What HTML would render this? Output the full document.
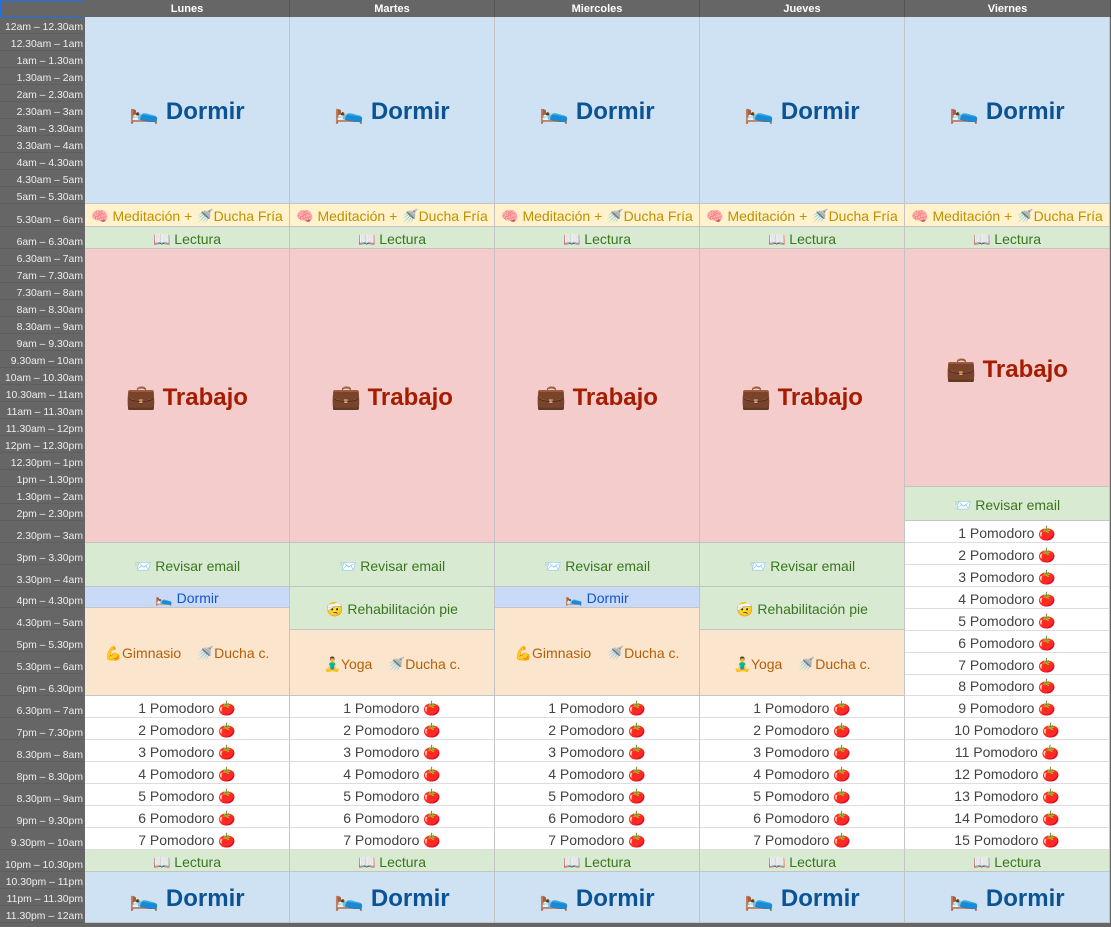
<!DOCTYPE html>
<html><head><meta charset="utf-8"><style>
body{margin:0;width:1111px;height:927px;background:#666;position:relative;overflow:hidden;font-family:"Liberation Sans",sans-serif}
.t{position:absolute;left:0;width:83px;text-align:right;font-size:10.4px;color:#eee;display:flex;align-items:flex-end;justify-content:flex-end;padding-bottom:0px;box-sizing:border-box;border-bottom:1px solid #5e5e5e}
.h{position:absolute;top:0;height:17px;background:#666;color:#fff;font-size:11px;font-weight:bold;text-align:center;line-height:18px;border-right:1px solid #555;box-sizing:border-box}
.b{position:absolute;display:flex;align-items:center;justify-content:center;box-sizing:border-box;border-right:1px solid #c4c4c4;border-bottom:1px solid #c4c4c4;font-size:14px;white-space:nowrap;overflow:hidden;padding-top:3px}
.D{background:#cfe2f3;color:#0b5394;font-size:24px;font-weight:bold}
.M{background:#fff2cc;color:#bf9000}
.L{background:#d9ead3;color:#38761d}
.T{background:#f4cccc;color:#a61c00;font-size:24px;font-weight:bold}
.d{background:#c9daf8;color:#1155cc}
.G{background:#fce5cd;color:#b45f06}
.P{background:#fff;color:#434343;border-bottom-color:#ddd}
</style></head><body>
<div class="h" style="left:85px;width:205px">Lunes</div>
<div class="h" style="left:290px;width:205px">Martes</div>
<div class="h" style="left:495px;width:205px">Miercoles</div>
<div class="h" style="left:700px;width:205px">Jueves</div>
<div class="h" style="left:905px;width:206px">Viernes</div>
<div style="position:absolute;left:0;top:0;width:84px;height:17px;border:1px solid #1a73e8;box-sizing:border-box"></div>

<div class="t" style="top:17px;height:17px">12am – 12.30am</div>
<div class="t" style="top:34px;height:17px">12.30am – 1am</div>
<div class="t" style="top:51px;height:17px">1am – 1.30am</div>
<div class="t" style="top:68px;height:17px">1.30am – 2am</div>
<div class="t" style="top:85px;height:17px">2am – 2.30am</div>
<div class="t" style="top:102px;height:17px">2.30am – 3am</div>
<div class="t" style="top:119px;height:17px">3am – 3.30am</div>
<div class="t" style="top:136px;height:17px">3.30am – 4am</div>
<div class="t" style="top:153px;height:17px">4am – 4.30am</div>
<div class="t" style="top:170px;height:17px">4.30am – 5am</div>
<div class="t" style="top:187px;height:17px">5am – 5.30am</div>
<div class="t" style="top:204px;height:23px">5.30am – 6am</div>
<div class="t" style="top:227px;height:22px">6am – 6.30am</div>
<div class="t" style="top:249px;height:17px">6.30am – 7am</div>
<div class="t" style="top:266px;height:17px">7am – 7.30am</div>
<div class="t" style="top:283px;height:17px">7.30am – 8am</div>
<div class="t" style="top:300px;height:17px">8am – 8.30am</div>
<div class="t" style="top:317px;height:17px">8.30am – 9am</div>
<div class="t" style="top:334px;height:17px">9am – 9.30am</div>
<div class="t" style="top:351px;height:17px">9.30am – 10am</div>
<div class="t" style="top:368px;height:17px">10am – 10.30am</div>
<div class="t" style="top:385px;height:17px">10.30am – 11am</div>
<div class="t" style="top:402px;height:17px">11am – 11.30am</div>
<div class="t" style="top:419px;height:17px">11.30am – 12pm</div>
<div class="t" style="top:436px;height:17px">12pm – 12.30pm</div>
<div class="t" style="top:453px;height:17px">12.30pm – 1pm</div>
<div class="t" style="top:470px;height:17px">1pm – 1.30pm</div>
<div class="t" style="top:487px;height:17px">1.30pm – 2am</div>
<div class="t" style="top:504px;height:17px">2pm – 2.30pm</div>
<div class="t" style="top:521px;height:22px">2.30pm – 3am</div>
<div class="t" style="top:543px;height:22px">3pm – 3.30pm</div>
<div class="t" style="top:565px;height:22px">3.30pm – 4am</div>
<div class="t" style="top:587px;height:21px">4pm – 4.30pm</div>
<div class="t" style="top:608px;height:22px">4.30pm – 5am</div>
<div class="t" style="top:630px;height:22px">5pm – 5.30pm</div>
<div class="t" style="top:652px;height:22px">5.30pm – 6am</div>
<div class="t" style="top:674px;height:22px">6pm – 6.30pm</div>
<div class="t" style="top:696px;height:22px">6.30pm – 7am</div>
<div class="t" style="top:718px;height:22px">7pm – 7.30pm</div>
<div class="t" style="top:740px;height:22px">8.30pm – 8am</div>
<div class="t" style="top:762px;height:22px">8pm – 8.30pm</div>
<div class="t" style="top:784px;height:22px">8.30pm – 9am</div>
<div class="t" style="top:806px;height:22px">9pm – 9.30pm</div>
<div class="t" style="top:828px;height:22px">9.30pm – 10am</div>
<div class="t" style="top:850px;height:22px">10pm – 10.30pm</div>
<div class="t" style="top:872px;height:17px">10.30pm – 11pm</div>
<div class="t" style="top:889px;height:17px">11pm – 11.30pm</div>
<div class="t" style="top:906px;height:17px">11.30pm – 12am</div>

<!-- Lunes -->
<div class="b D" style="left:85px;width:205px;top:17px;height:187px">🛌 Dormir</div>
<div class="b M" style="left:85px;width:205px;top:204px;height:23px">🧠 Meditación + 🚿Ducha Fría</div>
<div class="b L" style="left:85px;width:205px;top:227px;height:22px">📖 Lectura</div>
<div class="b T" style="left:85px;width:205px;top:249px;height:294px">💼 Trabajo</div>
<div class="b L" style="left:85px;width:205px;top:543px;height:44px">📨 Revisar email</div>
<div class="b d" style="left:85px;width:205px;top:587px;height:21px">🛌 Dormir</div>
<div class="b G" style="left:85px;width:205px;top:608px;height:88px">💪Gimnasio &nbsp;&nbsp; 🚿Ducha c.</div>
<div class="b P" style="left:85px;width:205px;top:696px;height:22px">1 Pomodoro 🍅</div>
<div class="b P" style="left:85px;width:205px;top:718px;height:22px">2 Pomodoro 🍅</div>
<div class="b P" style="left:85px;width:205px;top:740px;height:22px">3 Pomodoro 🍅</div>
<div class="b P" style="left:85px;width:205px;top:762px;height:22px">4 Pomodoro 🍅</div>
<div class="b P" style="left:85px;width:205px;top:784px;height:22px">5 Pomodoro 🍅</div>
<div class="b P" style="left:85px;width:205px;top:806px;height:22px">6 Pomodoro 🍅</div>
<div class="b P" style="left:85px;width:205px;top:828px;height:22px">7 Pomodoro 🍅</div>
<div class="b L" style="left:85px;width:205px;top:850px;height:22px">📖 Lectura</div>
<div class="b D" style="left:85px;width:205px;top:872px;height:51px">🛌 Dormir</div>

<!-- Martes -->
<div class="b D" style="left:290px;width:205px;top:17px;height:187px">🛌 Dormir</div>
<div class="b M" style="left:290px;width:205px;top:204px;height:23px">🧠 Meditación + 🚿Ducha Fría</div>
<div class="b L" style="left:290px;width:205px;top:227px;height:22px">📖 Lectura</div>
<div class="b T" style="left:290px;width:205px;top:249px;height:294px">💼 Trabajo</div>
<div class="b L" style="left:290px;width:205px;top:543px;height:44px">📨 Revisar email</div>
<div class="b L" style="left:290px;width:205px;top:587px;height:43px">🤕 Rehabilitación pie</div>
<div class="b G" style="left:290px;width:205px;top:630px;height:66px">🧘‍♂Yoga &nbsp;&nbsp; 🚿Ducha c.</div>
<div class="b P" style="left:290px;width:205px;top:696px;height:22px">1 Pomodoro 🍅</div>
<div class="b P" style="left:290px;width:205px;top:718px;height:22px">2 Pomodoro 🍅</div>
<div class="b P" style="left:290px;width:205px;top:740px;height:22px">3 Pomodoro 🍅</div>
<div class="b P" style="left:290px;width:205px;top:762px;height:22px">4 Pomodoro 🍅</div>
<div class="b P" style="left:290px;width:205px;top:784px;height:22px">5 Pomodoro 🍅</div>
<div class="b P" style="left:290px;width:205px;top:806px;height:22px">6 Pomodoro 🍅</div>
<div class="b P" style="left:290px;width:205px;top:828px;height:22px">7 Pomodoro 🍅</div>
<div class="b L" style="left:290px;width:205px;top:850px;height:22px">📖 Lectura</div>
<div class="b D" style="left:290px;width:205px;top:872px;height:51px">🛌 Dormir</div>

<!-- Miercoles -->
<div class="b D" style="left:495px;width:205px;top:17px;height:187px">🛌 Dormir</div>
<div class="b M" style="left:495px;width:205px;top:204px;height:23px">🧠 Meditación + 🚿Ducha Fría</div>
<div class="b L" style="left:495px;width:205px;top:227px;height:22px">📖 Lectura</div>
<div class="b T" style="left:495px;width:205px;top:249px;height:294px">💼 Trabajo</div>
<div class="b L" style="left:495px;width:205px;top:543px;height:44px">📨 Revisar email</div>
<div class="b d" style="left:495px;width:205px;top:587px;height:21px">🛌 Dormir</div>
<div class="b G" style="left:495px;width:205px;top:608px;height:88px">💪Gimnasio &nbsp;&nbsp; 🚿Ducha c.</div>
<div class="b P" style="left:495px;width:205px;top:696px;height:22px">1 Pomodoro 🍅</div>
<div class="b P" style="left:495px;width:205px;top:718px;height:22px">2 Pomodoro 🍅</div>
<div class="b P" style="left:495px;width:205px;top:740px;height:22px">3 Pomodoro 🍅</div>
<div class="b P" style="left:495px;width:205px;top:762px;height:22px">4 Pomodoro 🍅</div>
<div class="b P" style="left:495px;width:205px;top:784px;height:22px">5 Pomodoro 🍅</div>
<div class="b P" style="left:495px;width:205px;top:806px;height:22px">6 Pomodoro 🍅</div>
<div class="b P" style="left:495px;width:205px;top:828px;height:22px">7 Pomodoro 🍅</div>
<div class="b L" style="left:495px;width:205px;top:850px;height:22px">📖 Lectura</div>
<div class="b D" style="left:495px;width:205px;top:872px;height:51px">🛌 Dormir</div>

<!-- Jueves -->
<div class="b D" style="left:700px;width:205px;top:17px;height:187px">🛌 Dormir</div>
<div class="b M" style="left:700px;width:205px;top:204px;height:23px">🧠 Meditación + 🚿Ducha Fría</div>
<div class="b L" style="left:700px;width:205px;top:227px;height:22px">📖 Lectura</div>
<div class="b T" style="left:700px;width:205px;top:249px;height:294px">💼 Trabajo</div>
<div class="b L" style="left:700px;width:205px;top:543px;height:44px">📨 Revisar email</div>
<div class="b L" style="left:700px;width:205px;top:587px;height:43px">🤕 Rehabilitación pie</div>
<div class="b G" style="left:700px;width:205px;top:630px;height:66px">🧘‍♂Yoga &nbsp;&nbsp; 🚿Ducha c.</div>
<div class="b P" style="left:700px;width:205px;top:696px;height:22px">1 Pomodoro 🍅</div>
<div class="b P" style="left:700px;width:205px;top:718px;height:22px">2 Pomodoro 🍅</div>
<div class="b P" style="left:700px;width:205px;top:740px;height:22px">3 Pomodoro 🍅</div>
<div class="b P" style="left:700px;width:205px;top:762px;height:22px">4 Pomodoro 🍅</div>
<div class="b P" style="left:700px;width:205px;top:784px;height:22px">5 Pomodoro 🍅</div>
<div class="b P" style="left:700px;width:205px;top:806px;height:22px">6 Pomodoro 🍅</div>
<div class="b P" style="left:700px;width:205px;top:828px;height:22px">7 Pomodoro 🍅</div>
<div class="b L" style="left:700px;width:205px;top:850px;height:22px">📖 Lectura</div>
<div class="b D" style="left:700px;width:205px;top:872px;height:51px">🛌 Dormir</div>

<!-- Viernes -->
<div class="b D" style="left:905px;width:205px;top:17px;height:187px">🛌 Dormir</div>
<div class="b M" style="left:905px;width:205px;top:204px;height:23px">🧠 Meditación + 🚿Ducha Fría</div>
<div class="b L" style="left:905px;width:205px;top:227px;height:22px">📖 Lectura</div>
<div class="b T" style="left:905px;width:205px;top:249px;height:238px">💼 Trabajo</div>
<div class="b L" style="left:905px;width:205px;top:487px;height:34px">📨 Revisar email</div>
<div class="b P" style="left:905px;width:205px;top:521px;height:22px">1 Pomodoro 🍅</div>
<div class="b P" style="left:905px;width:205px;top:543px;height:22px">2 Pomodoro 🍅</div>
<div class="b P" style="left:905px;width:205px;top:565px;height:22px">3 Pomodoro 🍅</div>
<div class="b P" style="left:905px;width:205px;top:587px;height:22px">4 Pomodoro 🍅</div>
<div class="b P" style="left:905px;width:205px;top:609px;height:22px">5 Pomodoro 🍅</div>
<div class="b P" style="left:905px;width:205px;top:631px;height:22px">6 Pomodoro 🍅</div>
<div class="b P" style="left:905px;width:205px;top:653px;height:22px">7 Pomodoro 🍅</div>
<div class="b P" style="left:905px;width:205px;top:675px;height:21px">8 Pomodoro 🍅</div>
<div class="b P" style="left:905px;width:205px;top:696px;height:22px">9 Pomodoro 🍅</div>
<div class="b P" style="left:905px;width:205px;top:718px;height:22px">10 Pomodoro 🍅</div>
<div class="b P" style="left:905px;width:205px;top:740px;height:22px">11 Pomodoro 🍅</div>
<div class="b P" style="left:905px;width:205px;top:762px;height:22px">12 Pomodoro 🍅</div>
<div class="b P" style="left:905px;width:205px;top:784px;height:22px">13 Pomodoro 🍅</div>
<div class="b P" style="left:905px;width:205px;top:806px;height:22px">14 Pomodoro 🍅</div>
<div class="b P" style="left:905px;width:205px;top:828px;height:22px">15 Pomodoro 🍅</div>
<div class="b L" style="left:905px;width:205px;top:850px;height:22px">📖 Lectura</div>
<div class="b D" style="left:905px;width:205px;top:872px;height:51px">🛌 Dormir</div>
</body></html>
